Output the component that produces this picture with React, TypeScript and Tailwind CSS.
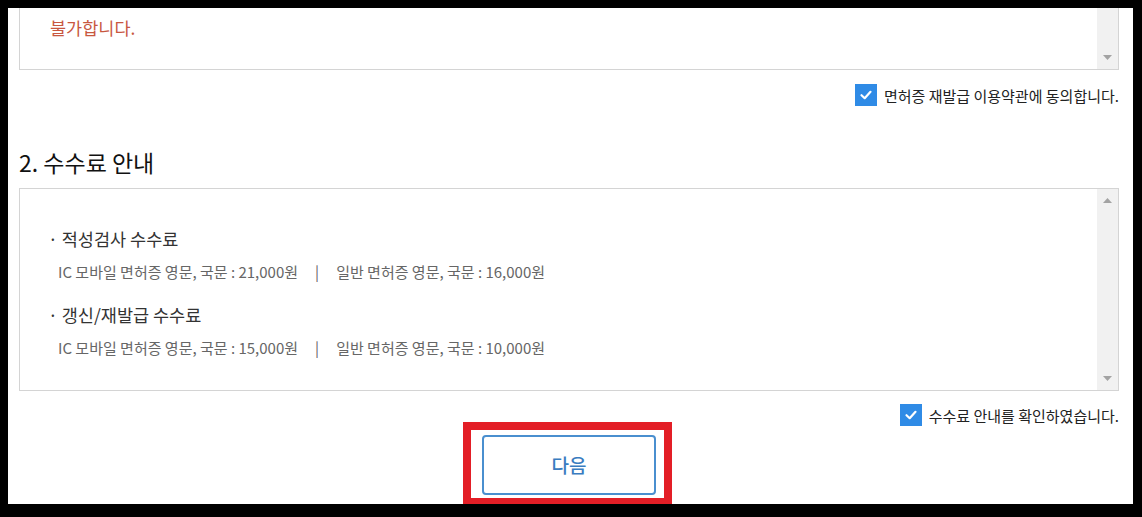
import React from "react";

const FONT = { fontFamily: '"Noto Sans CJK KR", "Noto Sans", sans-serif' };

function Check({ label }: { label: string }) {
  return (
    <label className="flex items-center gap-[7px] text-[15px] leading-none text-[#222]">
      <span className="flex h-[22px] w-[22px] items-center justify-center bg-[#2f8be6]">
        <svg width="14" height="14" viewBox="0 0 14 14" fill="none">
          <path d="M2.5 7.2 5.7 10.2 11.5 3.8" stroke="#fff" strokeWidth="2.2" strokeLinecap="round" strokeLinejoin="round" />
        </svg>
      </span>
      <span>{label}</span>
    </label>
  );
}

function ScrollTrack({ up }: { up?: boolean }) {
  return (
    <div className="flex w-[21px] flex-col items-center justify-between bg-[#f1f1f1] py-[9px]">
      {up ? (
        <svg width="9" height="5" viewBox="0 0 9 5">
          <path d="M0 5 4.5 0 9 5Z" fill="#a3a3a3" />
        </svg>
      ) : (
        <span />
      )}
      <svg width="9" height="5" viewBox="0 0 9 5">
        <path d="M0 0 4.5 5 9 0Z" fill="#a3a3a3" />
      </svg>
    </div>
  );
}

function FeeLine({ a, b }: { a: string; b: string }) {
  return (
    <p className="mt-[10px] pl-[10px] text-[15px] leading-[20px] text-[#666]">
      {a}
      <span className="mx-[17px] text-[#666]">|</span>
      {b}
    </p>
  );
}

export default function App() {
  return (
    <div className="h-[517px] w-[1142px] bg-black pl-[8px] pt-[8px]" style={FONT}>
      <div className="relative h-[496px] w-[1125px] overflow-hidden bg-white pl-[11px] pr-[14px]">
        {/* terms box, scrolled: only its last line shows */}
        <div className="-mt-[40px] flex h-[102px] border border-[#d4d4d4]">
          <div className="flex-1 px-[30px] pt-[45px] text-[17.5px] leading-[28px] text-[#c8573f]">
            <p>불가합니다.</p>
          </div>
          <ScrollTrack />
        </div>

        <div className="mt-[14px] flex justify-end">
          <Check label="면허증 재발급 이용약관에 동의합니다." />
        </div>

        <h2 className="mt-[41px] text-[23px] leading-[30px] text-[#111]">2. 수수료 안내</h2>

        <div className="mt-[11px] flex h-[203px] border border-[#d4d4d4]">
          <div className="flex-1 pl-[28px] pt-[37px]">
            <p className="text-[17.5px] leading-[26px] text-[#333]">· 적성검사 수수료</p>
            <FeeLine a="IC 모바일 면허증 영문, 국문 : 21,000원" b="일반 면허증 영문, 국문 : 16,000원" />
            <p className="mt-[20px] text-[17.5px] leading-[26px] text-[#333]">· 갱신/재발급 수수료</p>
            <FeeLine a="IC 모바일 면허증 영문, 국문 : 15,000원" b="일반 면허증 영문, 국문 : 10,000원" />
          </div>
          <ScrollTrack up />
        </div>

        <div className="mt-[13px] flex justify-end">
          <Check label="수수료 안내를 확인하였습니다." />
        </div>

        <div className="mt-[9px] flex justify-center">
          <div className="relative">
            <button
              type="button"
              className="h-[60px] w-[174px] rounded-[4px] border-2 border-[#4a8fcf] bg-white text-[19px] font-medium text-[#3a7cc0]"
            >
              다음
            </button>
            {/* red annotation frame */}
            <div className="pointer-events-none absolute -bottom-[11px] -left-[19px] -right-[16px] -top-[13px] border-[8px] border-[#e31e26]" />
          </div>
        </div>
      </div>
    </div>
  );
}
